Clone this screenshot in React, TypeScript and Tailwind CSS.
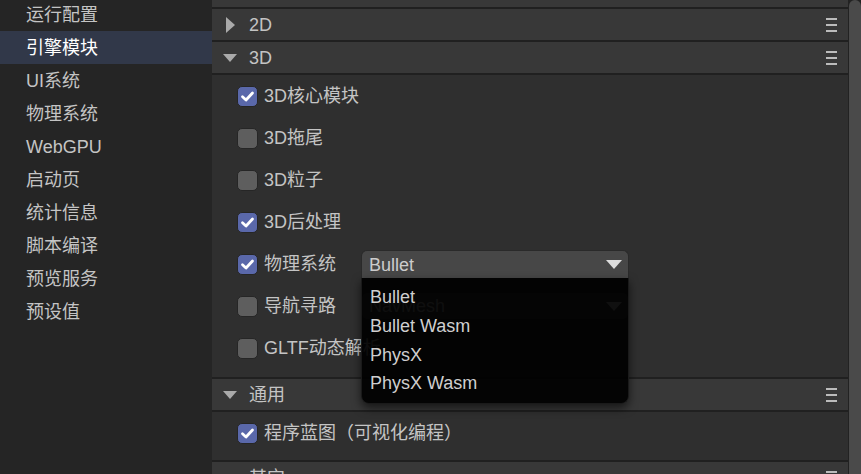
import { useState } from "react";

type Row = { label: string; checked: boolean; select?: string };

const NAV = ["运行配置", "引擎模块", "UI系统", "物理系统", "WebGPU", "启动页", "统计信息", "脚本编译", "预览服务", "预设值"];

const ROWS_3D: Row[] = [
  { label: "3D核心模块", checked: true },
  { label: "3D拖尾", checked: false },
  { label: "3D粒子", checked: false },
  { label: "3D后处理", checked: true },
  { label: "物理系统", checked: true, select: "Bullet" },
  { label: "导航寻路", checked: false, select: "NavMesh" },
  { label: "GLTF动态解析", checked: false },
];

const PHYSICS = ["Bullet", "Bullet Wasm", "PhysX", "PhysX Wasm"];

function Hamburger() {
  return (
    <svg width="11" height="14" viewBox="0 0 11 14" className="ml-auto shrink-0">
      <rect x="0" y="0" width="11" height="2" fill="#bcbcbc" />
      <rect x="0" y="6" width="11" height="2" fill="#bcbcbc" />
      <rect x="0" y="12" width="11" height="2" fill="#bcbcbc" />
    </svg>
  );
}

function Header({ title, open }: { title: string; open: boolean }) {
  return (
    <div className="flex h-[33px] shrink-0 items-center border-t-2 border-[#202020] bg-[#383838] pl-[11px] pr-[11px]">
      <span className="flex w-[26px] shrink-0 items-center">
        {open ? (
          <svg width="14" height="8" viewBox="0 0 14 8">
            <polygon points="0,0 14,0 7,8" fill="#aaaaaa" />
          </svg>
        ) : (
          <svg width="9" height="16" viewBox="0 0 9 16" className="ml-[3px]">
            <polygon points="0,0 9,8 0,16" fill="#aaaaaa" />
          </svg>
        )}
      </span>
      <span className="leading-none text-[#c4c4c4]">{title}</span>
      <Hamburger />
    </div>
  );
}

function Checkbox({ checked }: { checked: boolean }) {
  return (
    <span
      className={
        checked
          ? "flex h-[21px] w-[21px] shrink-0 items-center justify-center rounded-[5px] border border-[#262626] bg-[#5a68aa]"
          : "flex h-[21px] w-[21px] shrink-0 items-center justify-center rounded-[5px] border border-[#262626] bg-[#5e5e5e]"
      }
    >
      {checked && (
        <svg width="15" height="15" viewBox="0 0 15 15">
          <polyline points="2.5,7.8 6,11 12.5,4" fill="none" stroke="#ffffff" strokeWidth="2.8" strokeLinecap="round" strokeLinejoin="round" />
        </svg>
      )}
    </span>
  );
}

function SelectBox({ value, open }: { value: string; open?: boolean }) {
  return (
    <div
      className={
        open
          ? "flex h-[28px] w-[268px] items-center rounded-t-[6px] border border-b-0 border-[#2a2a2a] bg-[#474747] pl-[7px] pr-[6px]"
          : "flex h-[28px] w-[268px] items-center rounded-[6px] border border-[#2a2a2a] bg-[#474747] pl-[7px] pr-[6px]"
      }
    >
      <span className="leading-none text-[#cccccc]">{value}</span>
      <svg width="16" height="9" viewBox="0 0 16 9" className="ml-auto">
        <polygon points="0,0 16,0 8,9" fill="#dddddd" />
      </svg>
    </div>
  );
}

export default function App() {
  const [active] = useState(1);

  return (
    <div className="flex h-[474px] w-[861px] overflow-hidden bg-[#252525] font-['Liberation_Sans','Noto_Sans_CJK_SC',sans-serif] text-[18px]">
      <aside className="w-[212px] shrink-0 bg-[#252525]">
        <ul className="-mt-[2px]">
          {NAV.map((item, i) => (
            <li
              key={item}
              className={
                i === active
                  ? "flex h-[33px] items-center bg-[#313849] pl-[26px] leading-none text-white"
                  : "flex h-[33px] items-center pl-[26px] leading-none text-[#c4c4c4]"
              }
            >
              {item}
            </li>
          ))}
        </ul>
      </aside>

      <main className="flex flex-1 bg-[#222222]">
        <div className="relative flex w-[636px] flex-col overflow-hidden bg-[#2f2f2f]">
          <div className="h-[7px] shrink-0 bg-[#383838]" />
          <Header title="2D" open={false} />
          <Header title="3D" open />
          <div className="shrink-0 border-t-2 border-[#202020] pb-2 pl-[25px]">
            {ROWS_3D.map((row) => (
              <div key={row.label} className="flex h-[42px] items-center">
                <div className="flex w-[124px] shrink-0 items-center gap-[6px]">
                  <Checkbox checked={row.checked} />
                  <span className="whitespace-nowrap leading-none text-[#c4c4c4]">{row.label}</span>
                </div>
                {row.select && (
                  <div className="relative">
                    <SelectBox value={row.select} open={row.select === "Bullet"} />
                    {row.select === "Bullet" && (
                      <ul className="absolute left-0 top-full z-10 w-[268px] rounded-b-[8px] border border-t-0 border-[#1a1a1a] bg-black/[0.93] pb-[5px] pt-[5px] shadow-[0_4px_10px_rgba(0,0,0,0.6)]">
                        {PHYSICS.map((p) => (
                          <li key={p} className="flex h-[28.67px] items-center pl-[8px] leading-none text-[#cfcfcf]">
                            {p}
                          </li>
                        ))}
                      </ul>
                    )}
                  </div>
                )}
              </div>
            ))}
          </div>
          <Header title="通用" open />
          <div className="shrink-0 border-t-2 border-[#202020] pb-[6px] pl-[25px]">
            <div className="flex h-[42px] items-center gap-[6px]">
              <Checkbox checked />
              <span className="whitespace-nowrap leading-none text-[#c4c4c4]">程序蓝图（可视化编程）</span>
            </div>
          </div>
          <Header title="其它" open />
        </div>
        <div className="ml-px w-[12px] shrink-0 rounded-t-[6px] bg-[#4a4a4a]" />
      </main>
    </div>
  );
}
